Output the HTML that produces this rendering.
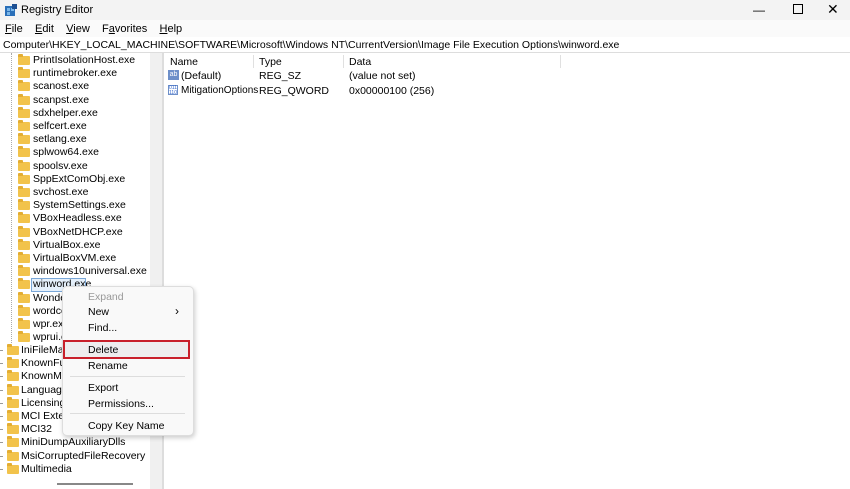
<!DOCTYPE html><html><head><style>
body{margin:0;width:850px;height:489px;overflow:hidden;background:#fff;font-family:"Liberation Sans",sans-serif;font-size:11px;color:#000;position:relative}
.a{position:absolute;white-space:nowrap}
.f{position:absolute;width:12px;height:9px;background:#f2c34b;border-radius:1px}
.f:before{content:"";position:absolute;left:0;top:-2px;width:5px;height:3px;background:#e3ad33;border-radius:1px 1px 0 0}
.t{position:absolute;white-space:nowrap;font-size:10.5px}
.mi{position:absolute;left:88px;font-size:10.5px}
</style></head><body>
<div class="a" style="left:0;top:0;width:850px;height:20px;background:#f3f3f3"></div>
<svg class="a" style="left:5px;top:4px" width="12" height="12"><rect x="0" y="2" width="10" height="10" fill="#2a6fb8"/><rect x="2" y="4" width="3" height="3" fill="#7ab6e8"/><rect x="6" y="4" width="3" height="3" fill="#7ab6e8"/><rect x="2" y="8" width="3" height="3" fill="#7ab6e8"/><rect x="7" y="0" width="5" height="5" fill="#1d4f91"/></svg>
<div class="a" style="left:21px;top:4px;font-size:11px">Registry Editor</div>
<div class="a" style="left:753px;top:3px;font-size:12px">—</div>
<div class="a" style="left:793px;top:4px;width:8px;height:8px;border:1px solid #000"></div>
<div class="a" style="left:827px;top:1px;font-size:14px">✕</div>
<div class="a" style="left:0;top:20px;width:850px;height:17px;background:#fafafa"></div>
<div class="a" style="left:5px;top:23px"><u>F</u>ile&nbsp;&nbsp;&nbsp;&nbsp;<u>E</u>dit&nbsp;&nbsp;&nbsp;&nbsp;<u>V</u>iew&nbsp;&nbsp;&nbsp;&nbsp;F<u>a</u>vorites&nbsp;&nbsp;&nbsp;&nbsp;<u>H</u>elp</div>
<div class="a" style="left:0;top:37px;width:850px;height:15px;border-bottom:1px solid #ddd"></div>
<div class="a" style="left:3px;top:39px;font-size:10.5px">Computer\HKEY_LOCAL_MACHINE\SOFTWARE\Microsoft\Windows NT\CurrentVersion\Image File Execution Options\winword.exe</div>
<div class="a" style="left:150px;top:53px;width:13px;height:436px;background:#f0f0f0"></div>
<div class="a" style="left:162px;top:53px;width:2px;height:436px;background:#ddd"></div>
<div class="a" style="left:57px;top:483px;width:76px;height:2px;background:#888"></div>
<div class="a" style="left:31px;top:278px;width:53px;height:12px;border:1px solid #7aa7d8;background:#e5f0fb"></div>
<div class="a" style="left:11px;top:53px;width:0;height:290px;border-left:1px dotted #aaa"></div>
<div id="tree"></div>
<div class="t" style="left:170px;top:56px">Name</div><div class="t" style="left:259px;top:56px">Type</div><div class="t" style="left:349px;top:56px">Data</div>
<div class="a" style="left:253px;top:55px;width:1px;height:13px;background:#e0e0e0"></div>
<div class="a" style="left:343px;top:55px;width:1px;height:13px;background:#e0e0e0"></div>
<div class="a" style="left:560px;top:55px;width:1px;height:13px;background:#e0e0e0"></div>
<div class="a" style="left:168px;top:70px;width:11px;height:10px;background:#6d8fc9;color:#fff;font-size:7px;line-height:10px;text-align:center">ab</div>
<div class="t" style="left:181px;top:70px">(Default)</div><div class="t" style="left:259px;top:70px">REG_SZ</div><div class="t" style="left:349px;top:70px">(value not set)</div>
<div class="a" style="left:168px;top:85px;width:10px;height:10px;border:1px solid #6d8fc9;color:#36c;font-size:5px;line-height:5px;box-sizing:border-box">011<br>110</div>
<div class="t" style="left:181px;top:85px;font-size:10px">MitigationOptions</div><div class="t" style="left:259px;top:85px">REG_QWORD</div><div class="t" style="left:349px;top:85px">0x00000100 (256)</div>
<div class="a" style="left:62px;top:286px;width:130px;height:148px;background:#f9f9f9;border:1px solid #ddd;border-radius:5px;box-shadow:1px 2px 5px rgba(0,0,0,.2)"></div>
<div class="mi" style="top:291px;color:#999">Expand</div>
<div class="mi" style="top:306px">New</div><div class="a" style="left:175px;top:304px;font-size:12px">›</div>
<div class="mi" style="top:322px">Find...</div>
<div class="a" style="left:63px;top:340px;width:123px;height:15px;border:2px solid #c8202a;background:#eee"></div>
<div class="mi" style="top:344px">Delete</div>
<div class="mi" style="top:360px">Rename</div>
<div class="a" style="left:70px;top:376px;width:115px;height:1px;background:#ddd"></div>
<div class="mi" style="top:382px">Export</div>
<div class="mi" style="top:398px">Permissions...</div>
<div class="a" style="left:70px;top:413px;width:115px;height:1px;background:#ddd"></div>
<div class="mi" style="top:420px">Copy Key Name</div>
<script>
var a=["PrintIsolationHost.exe","runtimebroker.exe","scanost.exe","scanpst.exe","sdxhelper.exe","selfcert.exe","setlang.exe","splwow64.exe","spoolsv.exe","SppExtComObj.exe","svchost.exe","SystemSettings.exe","VBoxHeadless.exe","VBoxNetDHCP.exe","VirtualBox.exe","VirtualBoxVM.exe","windows10universal.exe","winword.exe","Wonde","wordcc","wpr.exe","wprui.e"];
var b=["IniFileMap","KnownFun","KnownMa","Language","LicensingD","MCI Exten","MCI32","MiniDumpAuxiliaryDlls","MsiCorruptedFileRecovery","Multimedia"];
var h="";
a.forEach(function(s,i){var y=60+i*13.2;h+='<div class="f" style="left:18px;top:'+(y-4)+'px"></div><div class="t" style="left:33px;top:'+(y-6)+'px">'+s+'</div>';});
b.forEach(function(s,i){var y=350+i*13.2;h+='<div class="f" style="left:7px;top:'+(y-4)+'px"></div><div class="t" style="left:21px;top:'+(y-6)+'px">'+s+'</div><div class="a" style="left:0;top:'+y+'px;width:3px;height:1px;background:#999"></div>';});
document.getElementById("tree").innerHTML=h;
</script>
</body></html>
